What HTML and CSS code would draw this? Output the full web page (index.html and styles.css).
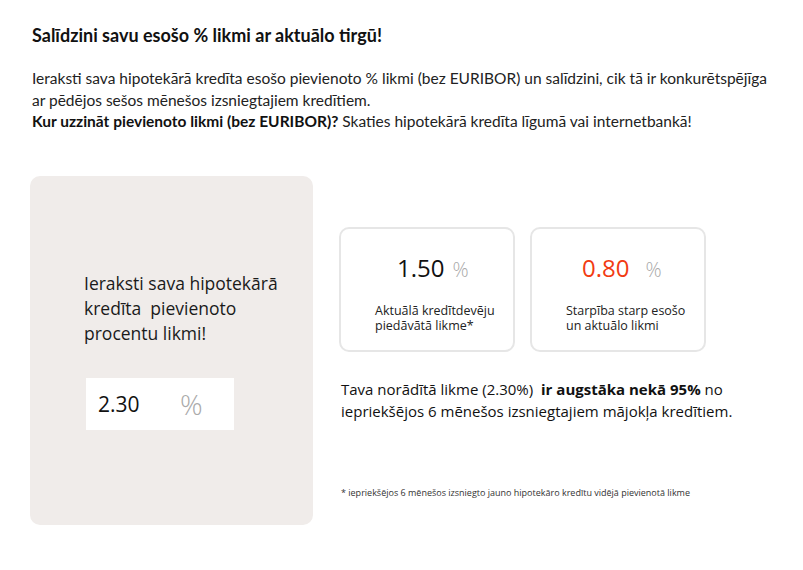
FILE: index.html
```html
<!DOCTYPE html>
<html>
<head>
  <title>Salīdzini likmi</title>
  <meta name="viewport" content="width=device-width, initial-scale=1.0" />
  <link rel="stylesheet" href="styles.css">
</head>
<body>
  <div class="page">
    <h2>Salīdzini savu esošo % likmi ar aktuālo tirgū!</h2>
    <p class="intro">
      Ieraksti sava hipotekārā kredīta esošo pievienoto % likmi (bez EURIBOR) un salīdzini, cik tā ir konkurētspējīga ar pēdējos sešos mēnešos izsniegtajiem kredītiem.<br>
      <strong>Kur uzzināt pievienoto likmi (bez EURIBOR)?</strong> Skaties hipotekārā kredīta līgumā vai internetbankā!
    </p>

    <div class="calc">
      <div class="entry">
        <p class="entry-label">Ieraksti sava hipotekārā kredīta&nbsp; pievienoto procentu likmi!</p>
        <div class="rate-input">
          <span class="rate-value">2.30</span>
          <span class="rate-unit">%</span>
        </div>
      </div>

      <div class="result">
        <div class="cards">
          <div class="card">
            <div class="card-num">1.50<span class="pct">%</span></div>
            <div class="card-label">Aktuālā kredītdevēju piedāvātā likme*</div>
          </div>
          <div class="card">
            <div class="card-num red">0.80<span class="pct wide">%</span></div>
            <div class="card-label">Starpība starp esošo un aktuālo likmi</div>
          </div>
        </div>
        <p class="verdict">Tava norādītā likme (2.30%) <strong>ir augstāka nekā 95%</strong> no<br>iepriekšējos 6 mēnešos izsniegtajiem mājokļa kredītiem.</p>
        <p class="footnote">* iepriekšējos 6 mēnešos izsniegto jauno hipotekāro kredītu vidējā pievienotā likme</p>
      </div>
    </div>
  </div>
</body>
</html>
```

FILE: styles.css
```css
body { margin: 0; background: #fff; color: #111; font-family: Lato, "Open Sans", sans-serif; }
.page { padding: 24px 32px; }
h2 { font-size: 18px; font-weight: 700; margin: 0 0 22px; color: #111; }
.intro { font-size: 15.5px; line-height: 21.5px; margin: 0 0 43px; color: #222; }
.intro strong { color: #111; }

.calc { display: flex; align-items: flex-start; margin-left: -2px; }
.entry { width: 283px; height: 349px; box-sizing: border-box; background: #f0ecea; border-radius: 10px; padding: 95px 20px 0 54px; font-family: "Open Sans", sans-serif; }
.entry-label { font-size: 17.5px; line-height: 25px; margin: 0 0 32px; color: #1a1a1a; }
.rate-input { display: flex; align-items: center; width: 148px; height: 52px; background: #fff; margin-left: 2px; }
.rate-value { font-size: 21px; color: #111; margin-left: 12px; width: 82px; }
.rate-unit { font-size: 28px; color: #aaa; font-weight: 300; }

.result { margin-left: 26px; padding-top: 51px; font-family: "Open Sans", sans-serif; }
.cards { display: flex; gap: 15px; }
.card { width: 176px; height: 125px; box-sizing: border-box; border: 2px solid #e6e6e6; border-radius: 10px; padding: 22px 10px 0 34px; }
.card-num { font-size: 24px; color: #111; padding-left: 22px; height: 38px; }
.card-num.red { color: #f23b12; padding-left: 16px; }
.pct { font-size: 20px; color: #aaa; margin-left: 8px; font-weight: 300; }
.pct.wide { margin-left: 16px; }
.card-label { font-size: 12.5px; line-height: 15px; margin-top: 14px; color: #222; }
.verdict { font-size: 15px; line-height: 22px; margin: 26px 0 0 2px; color: #111; width: 420px; }
.verdict strong { margin-left: 4px; }
.footnote { font-size: 9px; margin: 64px 0 0 2px; color: #333; }
```
